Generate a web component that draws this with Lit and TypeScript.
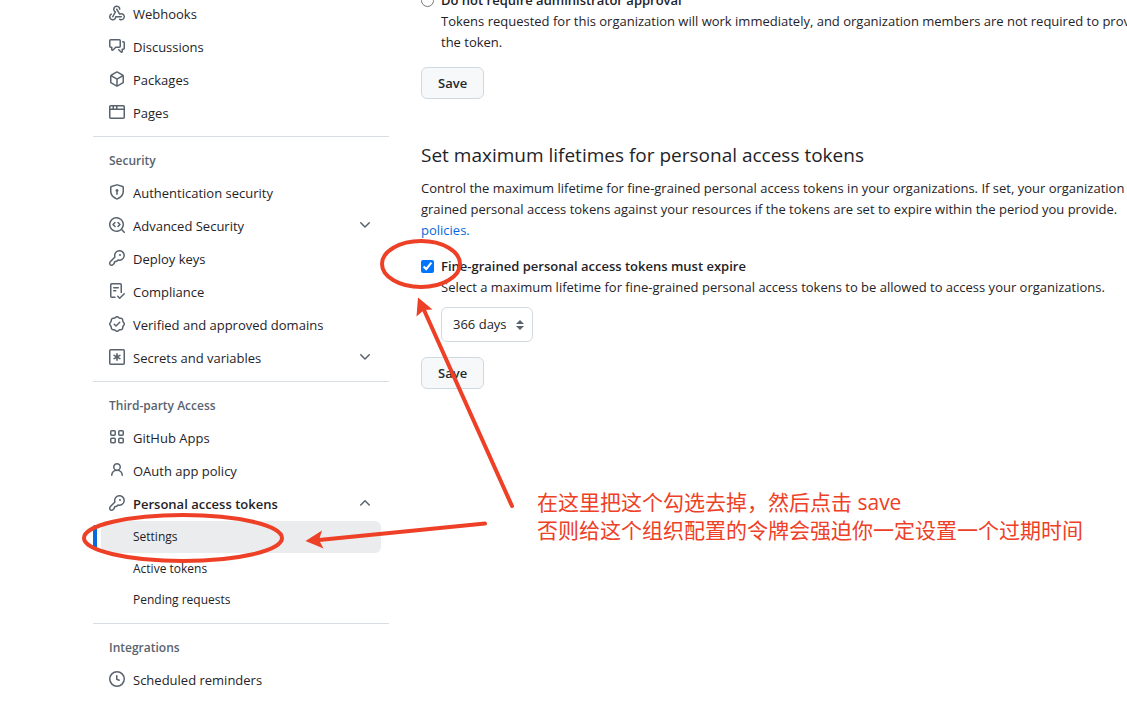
import { LitElement, html, css, svg } from "lit";
import { customElement, property } from "lit/decorators.js";

const ICONS: Record<string, unknown> = {
  webhook: svg`<path d="M5.5 4.25a2.25 2.25 0 0 1 4.5 0 .75.75 0 0 0 1.5 0 3.75 3.75 0 1 0-6.14 2.889l-2.272 4.258a.75.75 0 0 0 1.324.706L7 7.25a.75.75 0 0 0-.309-1.015A2.25 2.25 0 0 1 5.5 4.25Z"/><path d="M7.364 3.607a.75.75 0 0 1 1.03.257l2.608 4.349a3.75 3.75 0 1 1-.628 6.785.75.75 0 0 1 .752-1.299 2.25 2.25 0 1 0-.033-3.88.75.75 0 0 1-1.03-.256L7.107 4.636a.75.75 0 0 1 .257-1.03Z"/><path d="M2.9 8.776A.75.75 0 0 1 2.625 9.8 2.25 2.25 0 1 0 6 11.75a.75.75 0 0 1 .75-.751h5.5a.75.75 0 0 1 0 1.5H7.425a3.751 3.751 0 1 1-5.55-3.998.75.75 0 0 1 1.024.274Z"/>`,
  discussion: svg`<path d="M1.75 1h8.5c.966 0 1.75.784 1.75 1.75v5.5A1.75 1.75 0 0 1 10.25 10H7.061l-2.574 2.573A1.458 1.458 0 0 1 2 11.543V10h-.25A1.75 1.75 0 0 1 0 8.25v-5.5C0 1.784.784 1 1.75 1ZM1.5 2.75v5.5c0 .138.112.25.25.25h1a.75.75 0 0 1 .75.75v2.19l2.72-2.72a.749.749 0 0 1 .53-.22h3.5a.25.25 0 0 0 .25-.25v-5.5a.25.25 0 0 0-.25-.25h-8.5a.25.25 0 0 0-.25.25Zm13 2a.25.25 0 0 0-.25-.25h-.5a.75.75 0 0 1 0-1.5h.5c.966 0 1.75.784 1.75 1.75v5.5A1.75 1.75 0 0 1 14.25 12H14v1.543a1.458 1.458 0 0 1-2.487 1.03L9.22 12.28a.749.749 0 0 1 .326-1.275.749.749 0 0 1 .734.215l2.22 2.22v-2.19a.75.75 0 0 1 .75-.75h1a.25.25 0 0 0 .25-.25Z"/>`,
  package: svg`<path d="m8.878.392 5.25 3.045c.54.314.872.89.872 1.514v6.098a1.75 1.75 0 0 1-.872 1.514l-5.25 3.045a1.75 1.75 0 0 1-1.756 0l-5.25-3.045A1.75 1.75 0 0 1 1 11.049V4.951c0-.624.332-1.201.872-1.514L7.122.392a1.75 1.75 0 0 1 1.756 0ZM7.875 1.69l-4.63 2.685L8 7.133l4.755-2.758-4.63-2.685a.248.248 0 0 0-.25 0ZM2.5 5.677v5.372c0 .09.047.171.125.216l4.625 2.683V8.432Zm6.25 8.271 4.625-2.683a.25.25 0 0 0 .125-.216V5.677L8.75 8.432Z"/>`,
  browser: svg`<path d="M0 2.75C0 1.784.784 1 1.75 1h12.5c.966 0 1.75.784 1.75 1.75v10.5A1.75 1.75 0 0 1 14.25 15H1.75A1.75 1.75 0 0 1 0 13.25ZM14.5 6h-13v7.25c0 .138.112.25.25.25h12.5a.25.25 0 0 0 .25-.25Zm-6-3.5v2h6V2.75a.25.25 0 0 0-.25-.25ZM5 2.5v2h2v-2Zm-3.25 0a.25.25 0 0 0-.25.25V4.5h2v-2Z"/>`,
  shield: svg`<path d="m8.533.133 5.25 1.68A1.75 1.75 0 0 1 15 3.48V7c0 1.566-.32 3.182-1.303 4.682-.983 1.498-2.585 2.813-5.032 3.855a1.697 1.697 0 0 1-1.33 0c-2.447-1.042-4.049-2.357-5.032-3.855C1.32 10.182 1 8.566 1 7V3.48a1.75 1.75 0 0 1 1.217-1.667l5.25-1.68a1.748 1.748 0 0 1 1.066 0Zm-.61 1.429.001.001-5.25 1.68a.251.251 0 0 0-.174.237V7c0 1.36.275 2.666 1.057 3.859.784 1.194 2.121 2.342 4.366 3.298a.196.196 0 0 0 .154 0c2.245-.957 3.582-2.103 4.366-3.297C13.225 9.666 13.5 8.358 13.5 7V3.48a.25.25 0 0 0-.174-.238l-5.25-1.68a.25.25 0 0 0-.153 0ZM9.5 6.5c0 .536-.286 1.032-.75 1.3v2.45a.75.75 0 0 1-1.5 0V7.8A1.5 1.5 0 1 1 9.5 6.5Z"/>`,
  codescan: svg`<path d="M8.47 4.97a.75.75 0 0 0 0 1.06L9.94 7.5 8.47 8.97a.75.75 0 1 0 1.06 1.06l2-2a.75.75 0 0 0 0-1.06l-2-2a.75.75 0 0 0-1.06 0ZM6.53 6.03a.75.75 0 0 0-1.06-1.06l-2 2a.75.75 0 0 0 0 1.06l2 2a.75.75 0 1 0 1.06-1.06L5.06 7.5l1.47-1.47Z"/><path d="M12.246 13.307a7.501 7.501 0 1 1 1.06-1.06l2.474 2.473a.749.749 0 1 1-1.06 1.06ZM1.5 7.5a6.002 6.002 0 0 0 3.608 5.504 6.002 6.002 0 0 0 6.486-1.117.748.748 0 0 1 .292-.293A6 6 0 1 0 1.5 7.5Z"/>`,
  key: svg`<path fill="none" stroke="currentColor" stroke-width="1.5" stroke-linejoin="round" d="M5.9 6.9A4.75 4.75 0 1 1 9 10L7.9 11.1a.9.9 0 0 1-.6.3H6.2a.8.8 0 0 0-.8.8v.5a1 1 0 0 1-.3.7L3.9 14.7a1.6 1.6 0 0 1-1.1.5h-.6A1.45 1.45 0 0 1 .75 13.8v-.8a1.6 1.6 0 0 1 .5-1.2Z"/><circle cx="11" cy="5" r="1"/>`,
  checklist: svg`<path d="M2.5 1.75v11.5c0 .138.112.25.25.25h3.17a.75.75 0 0 1 0 1.5H2.75A1.75 1.75 0 0 1 1 13.25V1.75C1 .784 1.784 0 2.75 0h8.5C12.216 0 13 .784 13 1.75v7.736a.75.75 0 0 1-1.5 0V1.75a.25.25 0 0 0-.25-.25h-8.5a.25.25 0 0 0-.25.25Zm13.274 9.537v-.001l-4.557 4.45a.75.75 0 0 1-1.055-.008l-1.943-1.95a.75.75 0 0 1 1.062-1.058l1.419 1.425 4.026-3.932a.75.75 0 1 1 1.048 1.074ZM4.75 4h4.5a.75.75 0 0 1 0 1.5h-4.5a.75.75 0 0 1 0-1.5ZM4 7.75A.75.75 0 0 1 4.75 7h2a.75.75 0 0 1 0 1.5h-2A.75.75 0 0 1 4 7.75Z"/>`,
  verified: svg`<path d="m9.585.52.929.68c.153.112.331.186.518.215l1.138.175a2.678 2.678 0 0 1 2.24 2.24l.174 1.139c.029.187.103.365.215.518l.68.928a2.677 2.677 0 0 1 0 3.17l-.68.928a1.174 1.174 0 0 0-.215.518l-.175 1.138a2.678 2.678 0 0 1-2.241 2.241l-1.138.175a1.17 1.17 0 0 0-.518.215l-.928.68a2.677 2.677 0 0 1-3.17 0l-.928-.68a1.174 1.174 0 0 0-.518-.215L3.83 14.41a2.678 2.678 0 0 1-2.24-2.24l-.175-1.138a1.17 1.17 0 0 0-.215-.518l-.68-.928a2.677 2.677 0 0 1 0-3.17l.68-.928c.112-.153.186-.331.215-.518l.175-1.14a2.678 2.678 0 0 1 2.24-2.24l1.139-.175c.187-.029.365-.103.518-.215l.928-.68a2.677 2.677 0 0 1 3.17 0ZM7.303 1.728l-.927.68a2.67 2.67 0 0 1-1.18.489l-1.137.174a1.179 1.179 0 0 0-.987.987l-.174 1.136a2.677 2.677 0 0 1-.489 1.18l-.68.928a1.18 1.18 0 0 0 0 1.394l.68.927c.256.348.424.753.489 1.18l.174 1.137c.078.509.478.909.987.987l1.136.174a2.67 2.67 0 0 1 1.18.489l.928.68c.414.305.979.305 1.394 0l.927-.68a2.67 2.67 0 0 1 1.18-.489l1.137-.174a1.18 1.18 0 0 0 .987-.987l.174-1.136a2.67 2.67 0 0 1 .489-1.18l.68-.928a1.176 1.176 0 0 0 0-1.394l-.68-.927a2.686 2.686 0 0 1-.489-1.18l-.174-1.137a1.179 1.179 0 0 0-.987-.987l-1.136-.174a2.677 2.677 0 0 1-1.18-.489l-.928-.68a1.176 1.176 0 0 0-1.394 0ZM11.28 6.78l-3.75 3.75a.75.75 0 0 1-1.06 0L4.72 8.78a.751.751 0 0 1 .018-1.042.751.751 0 0 1 1.042-.018L7 8.94l3.22-3.22a.751.751 0 0 1 1.042.018.751.751 0 0 1 .018 1.042Z"/>`,
  asterisk: svg`<g fill="none" stroke="currentColor" stroke-width="1.5" stroke-linecap="round"><rect x=".75" y=".75" width="14.5" height="14.5" rx="1"/><path stroke-width="1.6" d="M8 4.75v6.5M5.1 6.35l5.8 3.3M10.9 6.35l-5.8 3.3"/></g>`,
  apps: svg`<g fill="none" stroke="currentColor" stroke-width="1.5"><rect x="1.75" y="1.75" width="4.5" height="4.5" rx="1"/><rect x="9.75" y="1.75" width="4.5" height="4.5" rx="1"/><rect x="1.75" y="9.25" width="4.5" height="4.5" rx="1"/><rect x="9.75" y="9.25" width="4.5" height="4.5" rx="1"/></g>`,
  person: svg`<path d="M10.561 8.073a6.005 6.005 0 0 1 3.432 5.142.75.75 0 1 1-1.498.07 4.5 4.5 0 0 0-8.99 0 .75.75 0 0 1-1.498-.07 6.004 6.004 0 0 1 3.431-5.142 3.999 3.999 0 1 1 5.123 0ZM10.5 5a2.5 2.5 0 1 0-5 0 2.5 2.5 0 0 0 5 0Z"/>`,
  clock: svg`<path d="M8 0a8 8 0 1 1 0 16A8 8 0 0 1 8 0ZM1.5 8a6.5 6.5 0 1 0 13 0 6.5 6.5 0 0 0-13 0Zm7-3.25v2.992l2.028.812a.75.75 0 0 1-.557 1.392l-2.5-1A.751.751 0 0 1 7 8.25v-3.5a.75.75 0 0 1 1.5 0Z"/>`,
  down: svg`<path d="M12.78 5.22a.749.749 0 0 1 0 1.06l-4.25 4.25a.749.749 0 0 1-1.06 0L3.22 6.28a.749.749 0 1 1 1.06-1.06L8 8.939l3.72-3.719a.749.749 0 0 1 1.06 0Z"/>`,
  up: svg`<path d="M3.22 10.53a.749.749 0 0 1 0-1.06l4.25-4.25a.749.749 0 0 1 1.06 0l4.25 4.25a.749.749 0 1 1-1.06 1.06L8 6.811 4.28 10.53a.749.749 0 0 1-1.06 0Z"/>`,
};

interface Item {
  icon: string;
  label: string;
  chevron?: "up" | "down";
  children?: string[];
}
interface Group {
  title?: string;
  items: Item[];
}

const GROUPS: Group[] = [
  {
    items: [
      { icon: "webhook", label: "Webhooks" },
      { icon: "discussion", label: "Discussions" },
      { icon: "package", label: "Packages" },
      { icon: "browser", label: "Pages" },
    ],
  },
  {
    title: "Security",
    items: [
      { icon: "shield", label: "Authentication security" },
      { icon: "codescan", label: "Advanced Security", chevron: "down" },
      { icon: "key", label: "Deploy keys" },
      { icon: "checklist", label: "Compliance" },
      { icon: "verified", label: "Verified and approved domains" },
      { icon: "asterisk", label: "Secrets and variables", chevron: "down" },
    ],
  },
  {
    title: "Third-party Access",
    items: [
      { icon: "apps", label: "GitHub Apps" },
      { icon: "person", label: "OAuth app policy" },
      {
        icon: "key",
        label: "Personal access tokens",
        chevron: "up",
        children: ["Settings", "Active tokens", "Pending requests"],
      },
    ],
  },
  { title: "Integrations", items: [{ icon: "clock", label: "Scheduled reminders" }] },
];

@customElement("oct-icon")
class OctIcon extends LitElement {
  static styles = css`
    :host {
      display: block;
      flex: none;
      width: 16px;
      height: 16px;
    }
    .glyph {
      display: block;
      fill: currentColor;
    }
  `;
  @property() name = "";
  render() {
    return html`<svg class="glyph" viewBox="0 0 16 16" width="16" height="16" aria-hidden="true">${ICONS[this.name]}</svg>`;
  }
}

@customElement("settings-nav")
class SettingsNav extends LitElement {
  static styles = css`
    :host {
      display: block;
      flex: none;
      width: 296px;
    }
    .list {
      list-style: none;
      margin: 0;
      padding: 0 8px;
    }
    .group + .group {
      border-top: 1px solid #d8dee4;
      margin-top: 6px;
      padding-top: 8px;
    }
    .title {
      margin: 0;
      padding: 7px 16px 8px;
      font-size: 12px;
      line-height: 17px;
      font-weight: 600;
      color: #59636e;
    }
    .row {
      box-sizing: border-box;
      display: flex;
      align-items: center;
      gap: 8px;
      width: 100%;
      height: 33px;
      padding: 0 8px;
      border: 0;
      background: none;
      font: inherit;
      color: #1f2328;
      text-align: left;
      text-decoration: none;
    }
    .row oct-icon {
      margin-bottom: 3px;
      color: #59636e;
    }
    .label {
      flex: 1;
    }
    .open {
      font-weight: 600;
    }
    .sub {
      list-style: none;
      margin: 0;
      padding: 0 0 2px;
    }
    .leaf {
      display: block;
      padding: 6px 8px 5px 32px;
      border-radius: 6px;
      font-size: 12px;
      line-height: 20px;
      color: #1f2328;
      text-decoration: none;
    }
    .current {
      position: relative;
      padding-bottom: 6px;
      background: #ebecee;
    }
    .current::before {
      content: "";
      position: absolute;
      left: -8px;
      top: 4px;
      bottom: 4px;
      width: 4px;
      border-radius: 6px;
      background: #0969da;
    }
  `;

  private item(i: Item) {
    const body = html`<oct-icon name=${i.icon}></oct-icon><span class="label">${i.label}</span>`;
    if (!i.chevron) return html`<li><a class="row" href="#">${body}</a></li>`;
    return html`<li>
      <button class="row ${i.children ? "open" : ""}" aria-expanded=${i.children ? "true" : "false"}>
        ${body}<oct-icon name=${i.chevron}></oct-icon>
      </button>
      ${i.children
        ? html`<ul class="sub">
            ${i.children.map(
              (c, n) => html`<li><a class="leaf ${n === 0 ? "current" : ""}" href="#">${c}</a></li>`
            )}
          </ul>`
        : ""}
    </li>`;
  }

  render() {
    return html`<nav aria-label="Organization settings">
      ${GROUPS.map(
        (g) => html`<section class="group">
          ${g.title ? html`<h3 class="title">${g.title}</h3>` : ""}
          <ul class="list">
            ${g.items.map((i) => this.item(i))}
          </ul>
        </section>`
      )}
    </nav>`;
  }
}

@customElement("app-root")
class AppRoot extends LitElement {
  static styles = css`
    :host {
      display: block;
      position: relative;
      box-sizing: border-box;
      height: 100vh;
      overflow: hidden;
      background: #fff;
      color: #1f2328;
      font-family: "Segoe UI", "Open Sans", "Noto Sans", sans-serif;
      font-size: 13px;
      line-height: 21px;
    }
    .page {
      display: flex;
      gap: 32px;
      padding-left: 93px;
      margin-top: -2px;
    }
    .main {
      flex: 1;
      min-width: 0;
      margin-top: -8px;
      white-space: nowrap;
    }
    .choice {
      display: grid;
      grid-template-columns: 13px 1fr;
      column-gap: 7px;
    }
    .choice .box {
      width: 13px;
      height: 13px;
      margin: 4px 0;
    }
    .choice .name {
      font-weight: 600;
    }
    .detail {
      grid-column: 2;
      margin: 0;
    }
    .btn {
      display: block;
      height: 32px;
      margin: 14px 0 0;
      padding: 0 16px;
      border: 1px solid #d1d9e0;
      border-radius: 6px;
      background: #f6f8fa;
      color: #25292e;
      font: inherit;
      font-weight: 600;
    }
    .heading {
      margin: 41px 0 8px;
      font-size: 19px;
      line-height: 30px;
      font-weight: 400;
    }
    .intro {
      margin: 0 0 15px;
    }
    .link {
      color: #0969da;
      text-decoration: none;
    }
    .picker {
      grid-column: 2;
      justify-self: start;
      display: grid;
      align-items: center;
      margin: 9px 0 1px;
    }
    .select {
      grid-area: 1 / 1;
      appearance: none;
      height: 35px;
      padding: 0 25px 0 11px;
      border: 1px solid #d1d9e0;
      border-radius: 6px;
      background: #fff;
      color: #1f2328;
      font: inherit;
    }
    .arrows {
      grid-area: 1 / 1;
      justify-self: end;
      margin-right: 9px;
      fill: #59636e;
      pointer-events: none;
    }
    .marks {
      position: absolute;
      left: 0;
      top: 0;
      pointer-events: none;
    }
    .note {
      position: absolute;
      left: 537px;
      top: 488px;
      margin: 0;
      font-family: "Segoe UI", "Open Sans", "Noto Sans CJK SC", sans-serif;
      font-size: 21px;
      line-height: 28px;
      font-weight: 400;
      color: #ee4026;
      white-space: nowrap;
    }
  `;

  render() {
    return html`
      <div class="page">
        <settings-nav></settings-nav>
        <main class="main">
          <div class="choice">
            <input class="box" type="radio" id="noapproval" name="approval" />
            <label class="name" for="noapproval">Do not require administrator approval</label>
            <p class="detail">
              Tokens requested for this organization will work immediately, and organization members are not required to provide<br />the token.
            </p>
          </div>
          <button class="btn">Save</button>
          <h2 class="heading">Set maximum lifetimes for personal access tokens</h2>
          <p class="intro">
            Control the maximum lifetime for fine-grained personal access tokens in your organizations. If set, your organization<br />grained
            personal access tokens against your resources if the tokens are set to expire within the period you provide.<br /><a
              class="link"
              href="#"
              >policies.</a
            >
          </p>
          <div class="choice">
            <input class="box" type="checkbox" id="expire" checked />
            <label class="name" for="expire">Fine-grained personal access tokens must expire</label>
            <p class="detail" id="hint">
              Select a maximum lifetime for fine-grained personal access tokens to be allowed to access your organizations.
            </p>
            <div class="picker">
              <select class="select" aria-labelledby="hint">
                <option>366 days</option>
              </select>
              <svg class="arrows" width="8" height="12" viewBox="0 0 8 12" aria-hidden="true">
                <path d="M4 1 8 5H0ZM4 11 0 7h8Z" />
              </svg>
            </div>
          </div>
          <button class="btn">Save</button>
        </main>
      </div>
      <svg class="marks" width="1127" height="703" aria-hidden="true">
        <g fill="none" stroke="#ee4026" stroke-width="4">
          <ellipse cx="421" cy="264" rx="39" ry="23" />
          <ellipse cx="183" cy="538" rx="99" ry="23" />
          <path d="M512 506 424 310M485 523.5 319 540" stroke-linecap="round" />
        </g>
        <path fill="#ee4026" d="M418 297.5 432.5 309.5 424 310 416.5 316.5ZM305.5 541 322 530.5 319 540 323.5 548.5Z" />
      </svg>
      <p class="note">
        在这里把这个勾选去掉，然后点击 save<br />否则给这个组织配置的令牌会强迫你一定设置一个过期时间
      </p>
    `;
  }
}
